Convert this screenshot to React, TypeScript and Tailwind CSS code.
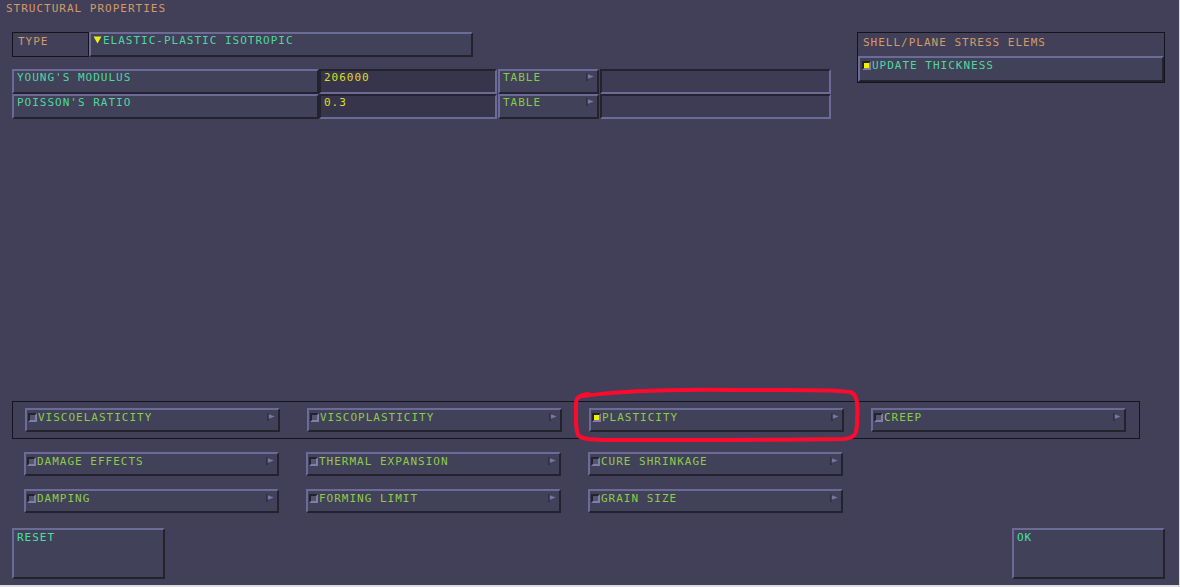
import React from 'react';

const font = { fontFamily: '"DejaVu Sans Mono", "Liberation Mono", monospace' };

const raised =
  'border-2 border-t-[#6c6a96] border-l-[#6c6a96] border-b-[#24232d] border-r-[#24232d] bg-[#42415a]';
const sunken =
  'border-2 border-t-[#24232d] border-l-[#24232d] border-b-[#6c6a96] border-r-[#6c6a96]';

const Flag = () => (
  <svg width="9" height="8" viewBox="0 0 9 8" className="block shrink-0">
    <path d="M1 0 L1 8" stroke="#26252f" strokeWidth="1.2" />
    <path d="M1.6 0.8 L8.6 3.6 L1.6 6.2 Z" fill="#7a78a4" stroke="#3a3950" strokeWidth="0.6" />
  </svg>
);

const Check = ({ on }: { on?: boolean }) => (
  <span
    className={`block w-[9px] h-[9px] shrink-0 border-2 border-t-[#24232d] border-l-[#24232d] border-b-[#807ea8] border-r-[#807ea8] ${
      on ? 'bg-[#f2f200]' : 'bg-[#55546e]'
    }`}
  />
);

const Toggle = ({ label, on }: { label: string; on?: boolean }) => (
  <div className={`${raised} w-[255px] h-[24px] flex items-start pl-[1px] pr-[2px] pt-[2px]`}>
    <div className="mt-[1px]">
      <Check on={on} />
    </div>
    <span className="text-[#8ccc48] text-[11px] leading-[12px] tracking-[1px] ml-[1px] flex-1">{label}</span>
    <div className="mt-[1px]">
      <Flag />
    </div>
  </div>
);

const App = () => {
  return (
    <div className="w-[1180px] h-[587px] bg-[#dcdce0]" style={font}>
      <div className="w-[1179px] h-[585px] bg-[#414058] flex flex-col relative">
        <div className="text-[#d49a6a] text-[11px] leading-[12px] tracking-[1px] pl-[6px] pt-[3px] h-[32px]">
          STRUCTURAL PROPERTIES
        </div>

        <div className="flex">
          <div className="pl-[12px] flex flex-col">
            <div className="flex h-[25px]">
              <div className="w-[77px] border border-[#15141c] text-[#d49a6a] text-[11px] tracking-[1px] pl-[5px] pt-[3px] leading-[12px]">
                TYPE
              </div>
              <div className={`${raised} w-[384px] flex items-start pl-[2px] pt-[1px]`}>
                <svg width="9" height="8" viewBox="0 0 9 8" className="block mt-[1px] shrink-0">
                  <path d="M0.5 0.5 L8.5 0.5 L4.5 7.5 Z" fill="#f0ec10" />
                </svg>
                <span className="text-[#4ed89e] text-[11px] leading-[12px] tracking-[1px] ml-[1px]">
                  ELASTIC-PLASTIC ISOTROPIC
                </span>
              </div>
            </div>

            <div className="h-[12px]" />

            {[
              ["YOUNG'S MODULUS", '206000'],
              ["POISSON'S RATIO", '0.3'],
            ].map(([label, value]) => (
              <div key={label} className="flex h-[25px]">
                <div className={`${raised} w-[307px] pl-[3px] pt-[1px] text-[#4ed89e] text-[11px] leading-[12px] tracking-[1px]`}>
                  {label}
                </div>
                <div className={`${sunken} bg-[#36354c] w-[178px] pl-[3px] pt-[1px] text-[#dede22] text-[11px] leading-[12px] tracking-[1px]`}>
                  {value}
                </div>
                <div className={`${raised} ml-[1px] w-[101px] flex items-start pl-[3px] pr-[2px] pt-[1px]`}>
                  <span className="flex-1 text-[#84cc48] text-[11px] leading-[12px] tracking-[1px]">TABLE</span>
                  <div className="mt-[1px]">
                    <Flag />
                  </div>
                </div>
                <div className={`${sunken} bg-[#3d3c54] ml-[1px] w-[231px]`} />
              </div>
            ))}
          </div>

          <div className="ml-auto mr-[14px] w-[308px] h-[51px] border border-[#15141c] flex flex-col">
            <div className="h-[23px] text-[#d49a6a] text-[11px] leading-[12px] tracking-[1px] pl-[5px] pt-[4px]">
              SHELL/PLANE STRESS ELEMS
            </div>
            <div className={`${raised} flex-1 flex items-start pl-[2px] pt-[2px]`}>
              <div className="mt-[1px]">
                <Check on />
              </div>
              <span className="text-[#4ed89e] text-[11px] leading-[12px] tracking-[1px] ml-[1px]">UPDATE THICKNESS</span>
            </div>
          </div>
        </div>

        <div className="h-[282px]" />

        <div className="ml-[12px] w-[1128px] h-[38px] border border-[#15141c] flex items-start gap-[27px] pl-[12px] pt-[6px]">
          <Toggle label="VISCOELASTICITY" />
          <Toggle label="VISCOPLASTICITY" />
          <Toggle label="PLASTICITY" on />
          <Toggle label="CREEP" />
        </div>

        <div className="flex flex-col gap-[13px] pl-[24px] pt-[13px]">
          <div className="flex gap-[27px]">
            <Toggle label="DAMAGE EFFECTS" />
            <Toggle label="THERMAL EXPANSION" />
            <Toggle label="CURE SHRINKAGE" />
          </div>
          <div className="flex gap-[27px]">
            <Toggle label="DAMPING" />
            <Toggle label="FORMING LIMIT" />
            <Toggle label="GRAIN SIZE" />
          </div>
        </div>

        <div className="flex justify-between pl-[12px] pr-[14px] mt-[15px]">
          <div className={`${raised} w-[153px] h-[51px] pl-[3px] pt-[2px] text-[#46e0a2] text-[11px] leading-[12px] tracking-[1px]`}>
            RESET
          </div>
          <div className={`${raised} w-[153px] h-[51px] pl-[3px] pt-[2px] text-[#46e0a2] text-[11px] leading-[12px] tracking-[1px]`}>
            OK
          </div>
        </div>

        <svg
          className="absolute left-[568px] top-[384px] pointer-events-none"
          width="300"
          height="64"
          viewBox="0 0 300 64"
        >
          <path
            d="M14 12 C60 6 120 5 170 6 C220 6 265 5 282 8 C290 10 290 22 289 38 C289 50 287 54 276 55 C220 56 140 56 60 56 C30 56 15 56 11 52 C7 48 8 30 8 20 C8 14 10 12 20 10"
            fill="none"
            stroke="#ff0a2c"
            strokeWidth="4"
            strokeLinecap="round"
            strokeLinejoin="round"
          />
        </svg>
      </div>
    </div>
  );
};

export default App;
